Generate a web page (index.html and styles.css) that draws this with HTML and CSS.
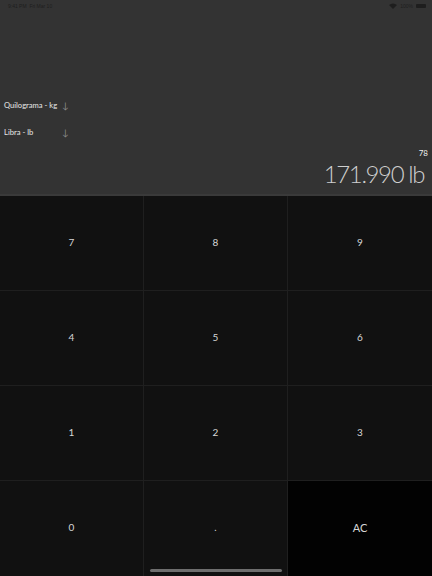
FILE: index.html
```html
<!DOCTYPE html>
<html lang="pt">
<head>
<meta charset="utf-8">
<title>Conversor</title>
<link rel="stylesheet" href="styles.css">
</head>
<body>
<div class="app">
  <section class="display">
    <div class="status">
      <span class="status-left">9:41 PM&nbsp;&nbsp;Fri Mar 10</span>
      <span class="status-right">
        <svg class="wifi" width="8" height="6" viewBox="0 0 8 6"><path d="M0 2 Q4 -1 8 2 L4 6 Z" fill="#1e1e1e"/></svg>
        <span>100%</span>
        <span class="battery"></span>
      </span>
    </div>
    <div class="units">
      <div class="unit"><span class="unit-name">Quilograma - kg</span><span class="arrow">↓</span></div>
      <div class="unit"><span class="unit-name">Libra - lb</span><span class="arrow">↓</span></div>
    </div>
    <div class="input">78</div>
    <div class="result">171.990 lb</div>
  </section>
  <section class="keypad">
    <button class="key">7</button>
    <button class="key">8</button>
    <button class="key">9</button>
    <button class="key">4</button>
    <button class="key">5</button>
    <button class="key">6</button>
    <button class="key">1</button>
    <button class="key">2</button>
    <button class="key">3</button>
    <button class="key">0</button>
    <button class="key">.</button>
    <button class="key key-clear">AC</button>
  </section>
  <div class="home-indicator"></div>
</div>
</body>
</html>
```
FILE: styles.css
```css
html, body {
  margin: 0;
  padding: 0;
  background: #111111;
}

.app {
  position: relative;
  width: 432px;
  height: 576px;
  overflow: hidden;
  font-family: "Lato", "Noto Sans", sans-serif;
  display: flex;
  flex-direction: column;
}

.display {
  height: 194px;
  background: #333333;
  border-bottom: 2px solid #3a3a3a;
  display: flex;
  flex-direction: column;
  color: #e6e6e6;
}

.status {
  height: 11px;
  display: flex;
  justify-content: space-between;
  align-items: center;
  padding: 0 6px 0 8px;
  font-size: 5px;
  color: #1e1e1e;
  font-family: "Liberation Sans", sans-serif;
}

.status-right {
  display: flex;
  align-items: center;
  gap: 3px;
}

.battery {
  width: 10px;
  height: 4px;
  background: #1e1e1e;
  border-radius: 1px;
}

.units {
  padding-top: 88px;
  padding-left: 4px;
  display: flex;
  flex-direction: column;
  gap: 15px;
}

.unit {
  display: flex;
  align-items: center;
  height: 12px;
  font-size: 7.6px;
  color: #e8e8e8;
}

.unit-name {
  width: 58px;
}

.arrow {
  color: #8a8a8a;
  font-size: 9px;
}

.input {
  margin-top: 10px;
  padding-right: 4px;
  text-align: right;
  font-size: 8px;
  color: #f0f0f0;
  line-height: 10px;
}

.result {
  margin-top: 2px;
  padding-right: 8px;
  text-align: right;
  font-size: 24px;
  font-weight: 300;
  letter-spacing: -1.4px;
  line-height: 28px;
  color: #cfcfcf;
}

.keypad {
  flex: 1;
  display: grid;
  grid-template-columns: repeat(3, 1fr);
  grid-template-rows: repeat(4, 1fr);
  background: #111111;
}

.key {
  border: 0;
  border-right: 1px solid #1f1f1f;
  border-bottom: 1px solid #1f1f1f;
  background: #111111;
  color: #d6d6d6;
  font-family: "Lato", "Noto Sans", sans-serif;
  font-size: 10px;
  padding: 0 0 3px;
}

.key:nth-child(3n) {
  border-right: 0;
}

.key:nth-last-child(-n+3) {
  border-bottom: 0;
}

.key-clear {
  background: #020202;
  font-size: 11px;
}

.home-indicator {
  position: absolute;
  left: 150px;
  bottom: 4px;
  width: 132px;
  height: 3px;
  border-radius: 2px;
  background: #6e6e6e;
}
```
